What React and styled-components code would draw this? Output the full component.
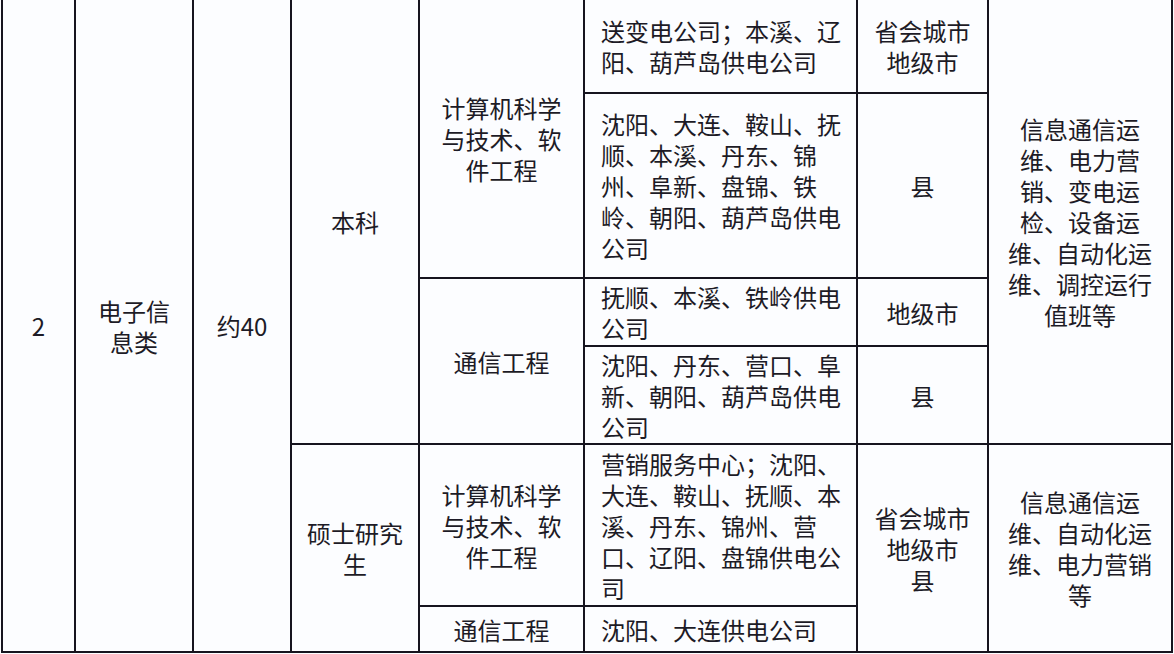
import styled, { createGlobalStyle } from 'styled-components';

const GlobalStyle = createGlobalStyle`
  body {
    margin: 0;
    background: #fcfdff;
  }
`;

const rows = [94, 185, 68, 98, 162, 46];
const cols = [73, 118, 98, 128, 165, 273, 131, 184];

export default function App() {
  return (
    <>
      <GlobalStyle />
      <Table lang="zh-CN">
        <colgroup>
          {cols.map((w, i) => (
            <col key={i} style={{ width: w }} />
          ))}
        </colgroup>
        <tbody>
          <Row $h={rows[0]}>
            <Cell rowSpan={6}>2</Cell>
            <Cell rowSpan={6} $pad="0 12px">
              电子信息类
            </Cell>
            <Cell rowSpan={6}>约40</Cell>
            <Cell rowSpan={4} $pad="0 12px">
              本科
            </Cell>
            <Cell rowSpan={2} $pad="0 16px">
              计算机科学与技术、软件工程
            </Cell>
            <PlaceCell>送变电公司；本溪、辽阳、葫芦岛供电公司</PlaceCell>
            <Cell $pad="0 12px">
              省会城市
              <br />
              地级市
            </Cell>
            <Cell rowSpan={4} $pad="0 10px">
              信息通信运维、电力营销、变电运检、设备运维、自动化运维、调控运行值班等
            </Cell>
          </Row>
          <Row $h={rows[1]}>
            <PlaceCell>
              沈阳、大连、鞍山、抚顺、本溪、丹东、锦州、阜新、盘锦、铁岭、朝阳、葫芦岛供电公司
            </PlaceCell>
            <Cell $pad="0 12px">县</Cell>
          </Row>
          <Row $h={rows[2]}>
            <Cell rowSpan={2} $pad="0 16px">
              通信工程
            </Cell>
            <PlaceCell>抚顺、本溪、铁岭供电公司</PlaceCell>
            <Cell $pad="0 12px">地级市</Cell>
          </Row>
          <Row $h={rows[3]}>
            <PlaceCell>沈阳、丹东、营口、阜新、朝阳、葫芦岛供电公司</PlaceCell>
            <Cell $pad="0 12px">县</Cell>
          </Row>
          <Row $h={rows[4]}>
            <Cell rowSpan={2} $pad="0 12px">
              硕士研究生
            </Cell>
            <Cell $pad="0 16px">计算机科学与技术、软件工程</Cell>
            <PlaceCell>
              营销服务中心；沈阳、大连、鞍山、抚顺、本溪、丹东、锦州、营口、辽阳、盘锦供电公司
            </PlaceCell>
            <Cell rowSpan={2} $pad="0 12px">
              省会城市
              <br />
              地级市
              <br />县
            </Cell>
            <Cell rowSpan={2} $pad="0 10px">
              信息通信运维、自动化运维、电力营销等
            </Cell>
          </Row>
          <Row $h={rows[5]}>
            <Cell $pad="0 16px">通信工程</Cell>
            <PlaceCell>沈阳、大连供电公司</PlaceCell>
          </Row>
        </tbody>
      </Table>
    </>
  );
}

const Table = styled.table`
  margin-left: 1px;
  table-layout: fixed;
  width: 1172px;
  border-collapse: separate;
  border-spacing: 0;
  border-left: 2px solid #16141f;
  font-family: 'Noto Sans CJK SC', 'Noto Sans', sans-serif;
  font-size: 24px;
  line-height: 31px;
  color: #1d1b26;
`;

const Row = styled.tr`
  height: ${props => props.$h}px;
`;

const Cell = styled.td`
  box-sizing: border-box;
  padding: ${props => props.$pad || '0 4px'};
  border-right: 2px solid #16141f;
  border-bottom: 2px solid #16141f;
  text-align: center;
  vertical-align: middle;
  line-break: strict;
`;

const PlaceCell = styled(Cell)`
  padding: 0 8px 0 16px;
  text-align: left;
`;
